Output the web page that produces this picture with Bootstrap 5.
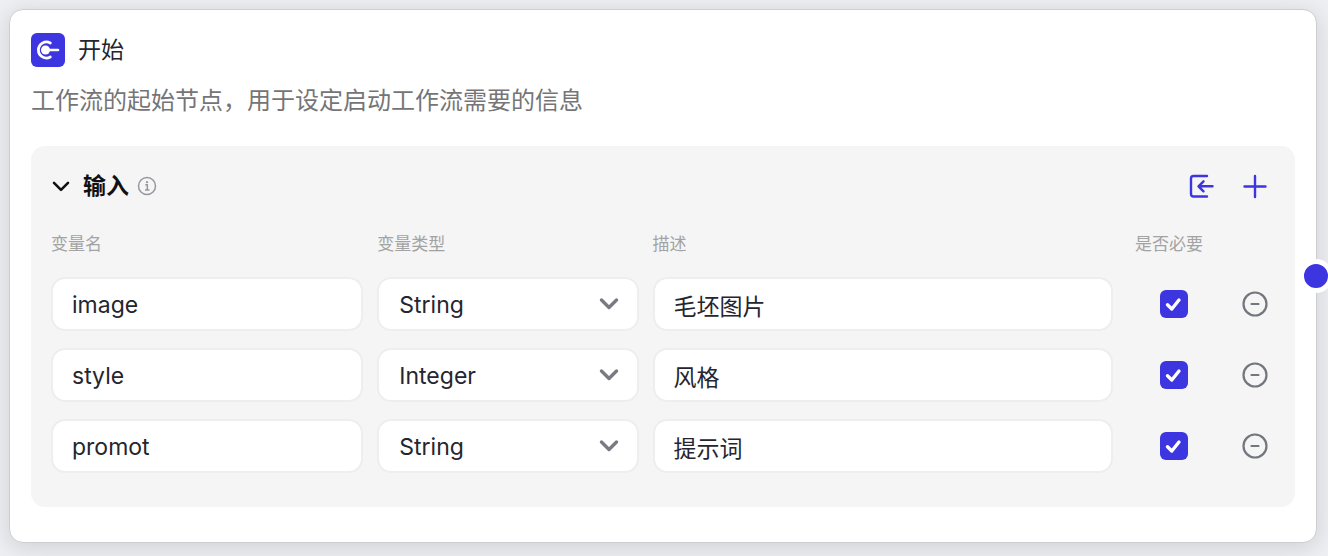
<!DOCTYPE html>
<html lang="zh-CN">
<head>
<meta charset="utf-8">
<meta name="viewport" content="width=device-width, initial-scale=1">
<title>开始</title>
<link href="https://cdn.jsdelivr.net/npm/bootstrap@5.3.0/dist/css/bootstrap.min.css" rel="stylesheet">
<style>
  :root { --accent: #3c35e0; --ink: #25252f; }
  body {
    background: #eeeff2;
    color: var(--ink);
    font-family: Inter, "Noto Sans CJK SC", sans-serif;
    font-size: 24px;
    line-height: 36px;
    overflow-x: hidden;
  }
  .node {
    margin: 9px 11px 13px 9px;
    padding: 22px 21px 35px;
    border: 1px solid #cdced1;
    border-radius: 14px;
    box-shadow: 0 4px 22px rgba(20, 24, 40, .14);
  }
  .node-icon { width: 34px; height: 34px; border-radius: 6px; background: var(--accent); }
  .node-title { font-size: 23px; line-height: 36px; margin-left: 13px; }
  .node-desc { color: #757577; margin: 15px 0 27px; }
  .panel { background: #f5f5f5; border-radius: 14px; padding: 22px 20px 34px; }
  .panel-title { font-size: 23px; line-height: 36px; color: #111114; }
  .var-grid {
    display: grid;
    grid-template-columns: 312fr 261fr 460fr 94px 40px;
    column-gap: 14px;
    row-gap: 17px;
    align-items: center;
  }
  .var-head { font-size: 17px; line-height: 24px; color: #a3a3a3; margin: 28px 0 4px; }
  .node .form-control, .node .form-select {
    height: 54px;
    padding: 2px 19px 0;
    font-size: 23px;
    color: var(--ink);
    border: 2px solid #eeeeee;
    border-radius: 14px;
    background-color: #fff;
  }
  .node .form-select {
    padding-left: 20px;
    background-image: url("data:image/svg+xml,%3Csvg xmlns='http://www.w3.org/2000/svg' viewBox='0 0 20 14'%3E%3Cpath d='M2.500 3l7.500 7.500 7.500-7.500' fill='none' stroke='%237a7a82' stroke-width='3.400' stroke-linecap='round' stroke-linejoin='round'/%3E%3C/svg%3E");
    background-size: 20px 14px;
    background-position: right 18px center;
  }
  .node .form-check-input {
    width: 28px; height: 28px; margin: 0;
    border: 0; border-radius: 6px;
  }
  .node .form-check-input:checked {
    background-color: var(--accent);
    background-image: url("data:image/svg+xml,%3Csvg xmlns='http://www.w3.org/2000/svg' viewBox='0 0 28 28'%3E%3Cpath d='M7.500 14.700l4.300 4.300 7.200-9' fill='none' stroke='%23fff' stroke-width='3.400' stroke-linecap='round' stroke-linejoin='round'/%3E%3C/svg%3E");
    background-size: 100%;
  }
  .icon-btn { border: 0; color: var(--accent); line-height: 0; }
  .tool-btns { gap: 28px; padding-right: 8px; }
  .remove-btn { color: #74767e; }
  .port {
    width: 34px; height: 34px;
    border: 5px solid #fff;
    background: var(--accent);
  }
</style>
</head>
<body>
<main class="node bg-white position-relative">
  <header class="d-flex align-items-center">
    <span class="node-icon flex-shrink-0 d-flex">
      <svg width="34" height="34" viewBox="0 0 34 34" fill="none" stroke="#fff" stroke-linecap="round" aria-hidden="true">
        <path d="M19.300 10A8 8 0 1 0 19.300 24" stroke-width="2.800"/>
        <circle cx="14.500" cy="17" r="4.500" fill="#fff" stroke="none"/>
        <path d="M15 17H27" stroke-width="2.600"/>
      </svg>
    </span>
    <h1 class="node-title fw-normal mb-0">开始</h1>
  </header>
  <p class="node-desc">工作流的起始节点，用于设定启动工作流需要的信息</p>

  <section class="panel">
    <div class="d-flex align-items-center">
      <button type="button" class="btn icon-btn p-0 text-dark" aria-label="收起">
        <svg width="20" height="20" viewBox="0 0 20 20" fill="none" stroke="#111114" stroke-width="2.600" stroke-linecap="round" stroke-linejoin="round"><path d="M3 6.800L10 13.800l7-7"/></svg>
      </button>
      <h2 class="panel-title fw-bold mb-0 ms-2 ps-1">输入</h2>
      <svg class="ms-2" width="20" height="20" viewBox="0 0 20 20" fill="none" stroke="#9697a0" stroke-width="1.500" aria-hidden="true">
        <circle cx="10" cy="10" r="8.500"/>
        <path d="M8.300 8.800h2v5M8 13.900h4.500"/>
        <circle cx="10" cy="6.200" r="1.100" fill="#9697a0" stroke="none"/>
      </svg>
      <div class="tool-btns d-flex ms-auto">
        <button type="button" class="btn icon-btn p-0" aria-label="导入">
          <svg width="28" height="28" viewBox="0 0 28 28" fill="none" stroke="currentColor" stroke-width="2.400" stroke-linecap="round" stroke-linejoin="round"><path d="M20 4H6.500Q4 4 4 6.500V22Q4 24.500 6.500 24.500H20M25.500 14.300H12M16.500 9.300L11.500 14.300L16.500 19.300"/></svg>
        </button>
        <button type="button" class="btn icon-btn p-0" aria-label="添加">
          <svg width="24" height="28" viewBox="0 0 24 28" fill="none" stroke="currentColor" stroke-width="2.400" stroke-linecap="round"><path d="M12 4v21M1.500 14.500h21"/></svg>
        </button>
      </div>
    </div>

    <div class="var-grid">
      <div class="var-head">变量名</div>
      <div class="var-head">变量类型</div>
      <div class="var-head">描述</div>
      <div class="var-head ps-2">是否必要</div>
      <div></div>

      <input type="text" class="form-control" value="image" aria-label="变量名">
      <select class="form-select" aria-label="变量类型"><option selected>String</option><option>Integer</option></select>
      <input type="text" class="form-control" value="毛坯图片" aria-label="描述">
      <input type="checkbox" class="form-check-input mx-auto" checked aria-label="是否必要">
      <button type="button" class="btn icon-btn remove-btn p-0" aria-label="删除">
        <svg width="28" height="28" viewBox="0 0 28 28" fill="none" stroke="currentColor" stroke-width="2.200" stroke-linecap="round"><circle cx="14" cy="14" r="11.500"/><path d="M10.500 14h7"/></svg>
      </button>

      <input type="text" class="form-control" value="style" aria-label="变量名">
      <select class="form-select" aria-label="变量类型"><option>String</option><option selected>Integer</option></select>
      <input type="text" class="form-control" value="风格" aria-label="描述">
      <input type="checkbox" class="form-check-input mx-auto" checked aria-label="是否必要">
      <button type="button" class="btn icon-btn remove-btn p-0" aria-label="删除">
        <svg width="28" height="28" viewBox="0 0 28 28" fill="none" stroke="currentColor" stroke-width="2.200" stroke-linecap="round"><circle cx="14" cy="14" r="11.500"/><path d="M10.500 14h7"/></svg>
      </button>

      <input type="text" class="form-control" value="promot" aria-label="变量名">
      <select class="form-select" aria-label="变量类型"><option selected>String</option><option>Integer</option></select>
      <input type="text" class="form-control" value="提示词" aria-label="描述">
      <input type="checkbox" class="form-check-input mx-auto" checked aria-label="是否必要">
      <button type="button" class="btn icon-btn remove-btn p-0" aria-label="删除">
        <svg width="28" height="28" viewBox="0 0 28 28" fill="none" stroke="currentColor" stroke-width="2.200" stroke-linecap="round"><circle cx="14" cy="14" r="11.500"/><path d="M10.500 14h7"/></svg>
      </button>
    </div>
  </section>

  <span class="port position-absolute top-50 start-100 translate-middle rounded-circle"></span>
</main>
<script src="https://cdn.jsdelivr.net/npm/bootstrap@5.3.0/dist/js/bootstrap.bundle.min.js"></script>
</body>
</html>
